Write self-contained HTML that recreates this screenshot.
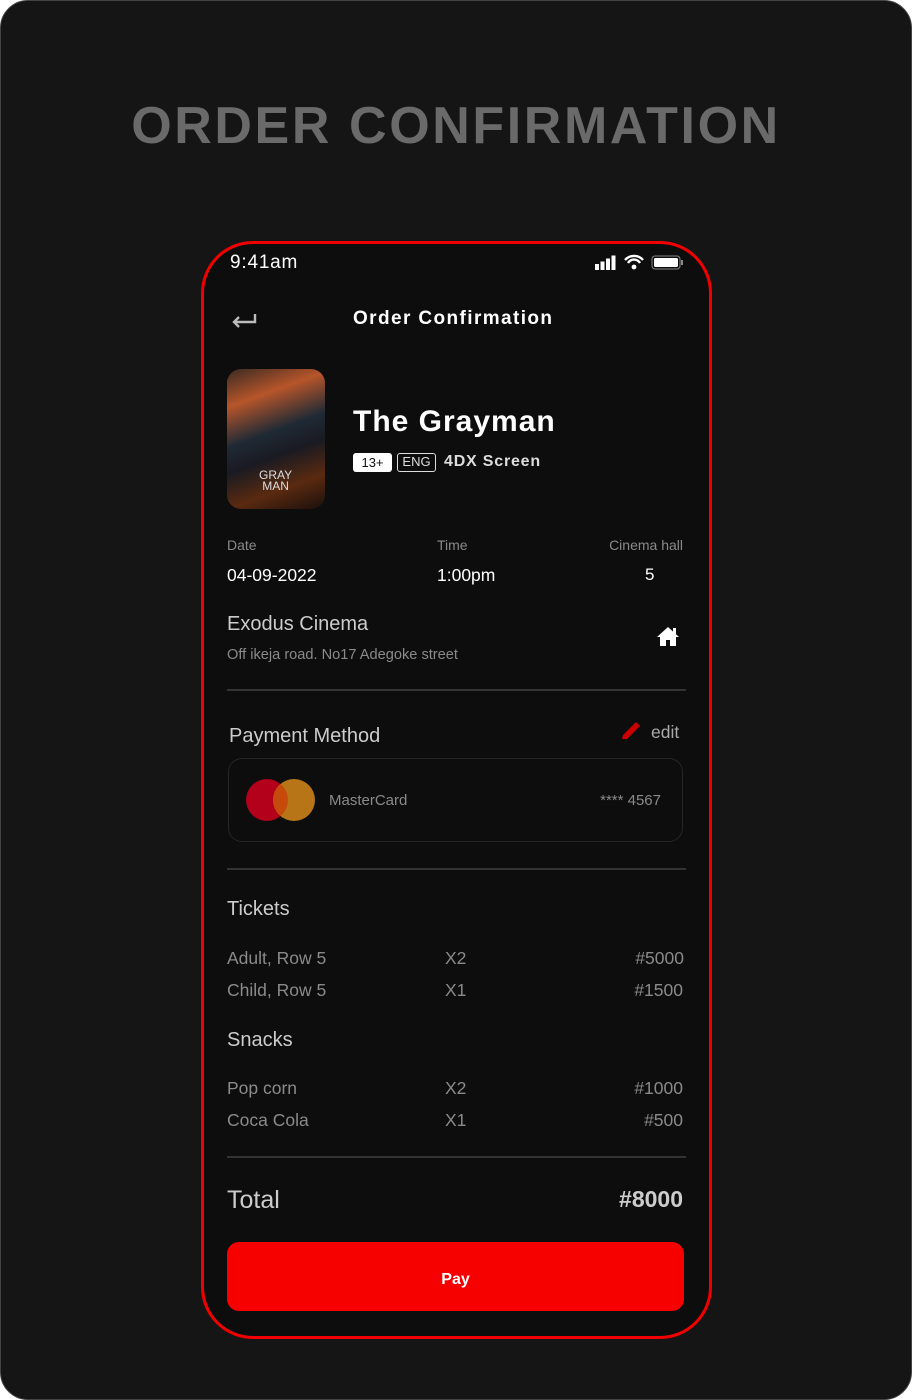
<!DOCTYPE html>
<html><head><meta charset="utf-8"><style>
*{margin:0;padding:0;box-sizing:border-box}
html,body{width:912px;height:1400px;background:#fff;overflow:hidden}
body{font-family:"Liberation Sans",sans-serif}
.outer{position:absolute;left:0;top:0;width:912px;height:1400px;background:#151515;border-radius:28px;border:1px solid #444}
.h1{position:absolute;left:0;width:912px;top:96px;text-align:center;font-size:52px;font-weight:bold;color:#6a6a6a;letter-spacing:2.6px}
.phone{position:absolute;left:201px;top:241px;width:511px;height:1098px;border:3px solid #f20000;border-radius:52px;background:#0d0d0d}
.t{position:absolute;white-space:nowrap}
.r{position:absolute;white-space:nowrap;text-align:right}
.line{position:absolute;left:227px;width:459px;height:2px;background:#333}
.g{color:#8a8a8a}
</style></head><body>
<div class="outer"></div>
<div class="h1">ORDER CONFIRMATION</div>
<div class="phone"></div>
<div class="t" style="left:230px;top:252px;color:#fff;font-size:19px;letter-spacing:0.8px">9:41am</div>
<svg style="position:absolute;left:594px;top:254px" width="92" height="18"><rect x="1" y="10" width="4" height="6" fill="#fff"/><rect x="6.5" y="7.5" width="4" height="8.5" fill="#fff"/><rect x="12" y="4.5" width="4" height="11.5" fill="#fff"/><rect x="17.5" y="1.5" width="4" height="14.5" fill="#fff"/><path d="M31 6 a12 12 0 0 1 18 0 M34 9 a7 7 0 0 1 12 0" stroke="#fff" stroke-width="2.4" fill="none"/><circle cx="40" cy="13" r="2.4" fill="#fff"/><rect x="58" y="2" width="28" height="13" rx="3" fill="none" stroke="#888"/><rect x="60" y="4" width="24" height="9" rx="1.5" fill="#fff"/><rect x="87" y="6" width="2" height="5" fill="#888"/></svg>
<svg style="position:absolute;left:230px;top:310px" width="28" height="20"><path d="M25 4 v8 H4 M9 7 L4 12 L9 17" stroke="#bbb" stroke-width="2.4" fill="none"/></svg>
<div class="t" style="left:353px;top:308px;color:#fff;font-size:19px;font-weight:bold;letter-spacing:1.4px">Order Confirmation</div>
<div style="position:absolute;left:227px;top:369px;width:98px;height:140px;border-radius:14px;background:linear-gradient(160deg,#3a2a22 0%,#b7552a 22%,#1f2a35 45%,#1a1a22 60%,#5a2a10 80%,#1b0f0c 100%)"></div>
<div class="t" style="left:259px;top:470px;color:#ddd;font-size:12px;line-height:11px;text-align:center">GRAY<br>MAN</div>
<div class="t" style="left:353px;top:405px;color:#fff;font-size:30px;font-weight:bold;letter-spacing:1px">The Grayman</div>
<div class="t" style="left:353px;top:453px;width:39px;height:19px;background:#fff;border-radius:3px;color:#111;font-size:13px;text-align:center;line-height:19px">13+</div>
<div class="t" style="left:397px;top:453px;width:39px;height:19px;border:1.5px solid #ddd;border-radius:3px;color:#ddd;font-size:13px;text-align:center;line-height:16px">ENG</div>
<div class="t" style="left:444px;top:453px;color:#ddd;font-size:16px;font-weight:bold;letter-spacing:0.8px">4DX Screen</div>
<div class="t g" style="left:227px;top:537px;font-size:14px">Date</div>
<div class="t g" style="left:437px;top:537px;font-size:14px">Time</div>
<div class="r g" style="right:229px;top:537px;font-size:14px">Cinema hall</div>
<div class="t" style="left:227px;top:565px;color:#fff;font-size:17.5px">04-09-2022</div>
<div class="t" style="left:437px;top:565px;color:#fff;font-size:17.5px">1:00pm</div>
<div class="t" style="left:645px;top:565px;color:#fff;font-size:17px">5</div>
<div class="t" style="left:227px;top:613px;color:#ccc;font-size:20px">Exodus Cinema</div>
<div class="t g" style="left:227px;top:647px;font-size:14.6px">Off ikeja road. No17 Adegoke street</div>
<svg style="position:absolute;left:656px;top:625px" width="24" height="22"><path d="M12 2 L1 12 H4 V21 H10 V15 H14 V21 H20 V12 H23 Z" fill="#fff"/><rect x="17" y="3" width="3" height="6" fill="#fff"/></svg>
<div class="line" style="top:689px"></div>
<div class="t" style="left:229px;top:725px;color:#ccc;font-size:20px">Payment Method</div>
<svg style="position:absolute;left:619px;top:719px" width="24" height="24"><path d="M3 20 L4 16 L17 3 L21 7 L8 20 Z" fill="#c00"/></svg>
<div class="t" style="left:651px;top:722px;color:#aaa;font-size:17.5px">edit</div>
<div style="position:absolute;left:228px;top:758px;width:455px;height:84px;border:1.5px solid #262626;border-radius:14px"></div>
<svg style="position:absolute;left:246px;top:778px" width="70" height="44"><circle cx="21" cy="22" r="21" fill="#b3001b"/><circle cx="48" cy="22" r="21" fill="#c27b18" opacity="0.95"/><path d="M34.5 6 a21 21 0 0 1 0 32 a21 21 0 0 1 0 -32z" fill="#c64a0a"/></svg>
<div class="t g" style="left:329px;top:792px;font-size:15px">MasterCard</div>
<div class="r g" style="right:251px;top:792px;font-size:15px">**** 4567</div>
<div class="line" style="top:868px"></div>
<div class="t" style="left:227px;top:898px;color:#ccc;font-size:20px">Tickets</div>
<div class="t g" style="left:227px;top:948px;font-size:17.5px">Adult, Row 5</div>
<div class="t g" style="left:445px;top:948px;font-size:17.5px">X2</div>
<div class="r g" style="right:228px;top:948px;font-size:17.5px">#5000</div>
<div class="t g" style="left:227px;top:980px;font-size:17.5px">Child, Row 5</div>
<div class="t g" style="left:445px;top:980px;font-size:17.5px">X1</div>
<div class="r g" style="right:229px;top:980px;font-size:17.5px">#1500</div>
<div class="t" style="left:227px;top:1029px;color:#ccc;font-size:20px">Snacks</div>
<div class="t g" style="left:227px;top:1078px;font-size:17.5px">Pop corn</div>
<div class="t g" style="left:445px;top:1078px;font-size:17.5px">X2</div>
<div class="r g" style="right:229px;top:1078px;font-size:17.5px">#1000</div>
<div class="t g" style="left:227px;top:1110px;font-size:17.5px">Coca Cola</div>
<div class="t g" style="left:445px;top:1110px;font-size:17.5px">X1</div>
<div class="r g" style="right:229px;top:1110px;font-size:17.5px">#500</div>
<div class="line" style="top:1156px"></div>
<div class="t" style="left:227px;top:1186px;color:#ccc;font-size:25px">Total</div>
<div class="r" style="right:229px;top:1186px;color:#ccc;font-size:23px;font-weight:bold">#8000</div>
<div style="position:absolute;left:227px;top:1242px;width:457px;height:69px;background:#f70000;border-radius:12px;color:#fff;font-weight:bold;font-size:16px;text-align:center;line-height:75px">Pay</div>
</body></html>
